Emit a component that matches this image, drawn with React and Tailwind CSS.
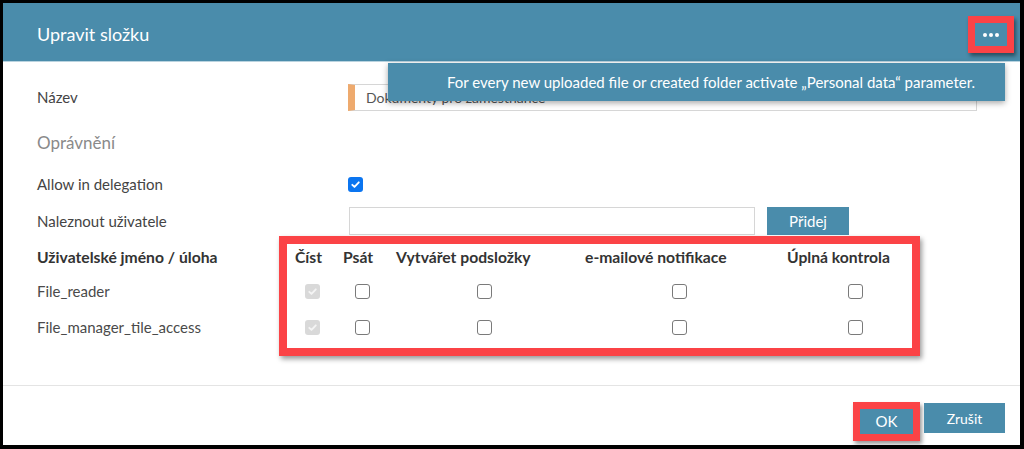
import React from "react";

const font = { fontFamily: "Lato, 'Open Sans', sans-serif" };

function Box({ state }) {
  if (state === "checked") {
    return (
      <span className="flex h-[15px] w-[15px] items-center justify-center rounded-[3px] bg-[#0b75f0]">
        <svg width="11" height="11" viewBox="0 0 12 12" fill="none">
          <path d="M2.5 6.3l2.4 2.4L9.6 3.6" stroke="#fff" strokeWidth="2" strokeLinecap="round" strokeLinejoin="round" />
        </svg>
      </span>
    );
  }
  if (state === "disabled") {
    return (
      <span className="flex h-[15px] w-[15px] items-center justify-center rounded-[3px] bg-[#d9d9d9]">
        <svg width="11" height="11" viewBox="0 0 12 12" fill="none">
          <path d="M2.5 6.3l2.4 2.4L9.6 3.6" stroke="#f4f4f4" strokeWidth="2" strokeLinecap="round" strokeLinejoin="round" />
        </svg>
      </span>
    );
  }
  return <span className="block h-[15px] w-[15px] rounded-[3px] border border-[#7a7a7a] bg-white" />;
}

const cols = [
  { w: "w-[250px]" },
  { w: "w-[48px]", hp: "pl-[8px]", cp: "pl-[18px]", t: "Číst" },
  { w: "w-[50px]", hp: "pl-[8px]", cp: "pl-[20px]", t: "Psát" },
  { w: "w-[175px]", hp: "pl-[11px]", cp: "pl-[92px]", t: "Vytvářet podsložky" },
  { w: "w-[200px]", hp: "pl-[25px]", cp: "pl-[112px]", t: "e-mailové notifikace" },
  { w: "w-[152px]", hp: "pl-[27px]", cp: "pl-[88px]", t: "Úplná kontrola" },
];

function UserRow({ name }) {
  return (
    <div className="flex h-[36px] items-center text-[15px] text-[#4a4a4a]">
      <div className={cols[0].w}>{name}</div>
      {cols.slice(1).map((c, i) => (
        <div key={i} className={`${c.w} ${c.cp} flex`}>
          <Box state={i === 0 ? "disabled" : "empty"} />
        </div>
      ))}
    </div>
  );
}

export default function App() {
  return (
    <div className="h-[449px] w-[1024px] bg-black pb-[4px] pl-[3px] pr-[4px] pt-[3px]" style={font}>
      <div className="relative flex h-full flex-col bg-white">
        {/* Header */}
        <div className="flex h-[59px] items-center justify-between border-b border-[#b9d3df] bg-[#4a8cab] pl-[34px] pr-[6px] pt-[5px]">
          <div className="text-[18px] text-white">Upravit složku</div>
          <div className="flex h-[37px] w-[46px] items-center justify-center border-[7px] border-[#fb4346] bg-[#4a8cab] shadow-[2px_3px_4px_rgba(0,0,0,0.45)]">
            <div className="flex gap-[2px]">
              <span className="block h-[4px] w-[4px] rounded-full bg-white" />
              <span className="block h-[4px] w-[4px] rounded-full bg-white" />
              <span className="block h-[4px] w-[4px] rounded-full bg-white" />
            </div>
          </div>
        </div>

        {/* Body */}
        <div className="flex h-[323px] flex-col pl-[34px]">
          <div className="mt-[22px] flex items-center">
            <div className="w-[311px] text-[15px] text-[#444]">Název</div>
            <div className="flex h-[27px] w-[629px] items-center border border-l-[7px] border-[#d6d6d6] border-l-[#eeaa6e] pl-[11px] text-[14px] text-[#555]">
              Dokumenty pro zaměstnance
            </div>
          </div>
          <div className="mt-[17px] flex h-[30px] items-center text-[17px] text-[#8a8a8a]">Oprávnění</div>
          <div className="mt-[11px] flex h-[30px] items-center">
            <div className="w-[311px] text-[15px] text-[#444]">Allow in delegation</div>
            <Box state="checked" />
          </div>
          <div className="mt-[8px] flex items-center">
            <div className="w-[312px] text-[15px] text-[#444]">Naleznout uživatele</div>
            <div className="h-[28px] w-[406px] border border-[#d6d6d6]" />
            <div className="ml-[12px] flex h-[28px] w-[82px] items-center justify-center bg-[#4a8cab] text-[15px] text-white">
              Přidej
            </div>
          </div>
          <div className="mt-[8px] flex h-[30px] items-center text-[15.7px] font-bold text-[#333]">
            <div className={cols[0].w}>Uživatelské jméno / úloha</div>
            {cols.slice(1).map((c, i) => (
              <div key={i} className={`${c.w} ${c.hp} whitespace-nowrap`}>{c.t}</div>
            ))}
          </div>
          <UserRow name="File_reader" />
          <UserRow name="File_manager_tile_access" />
        </div>

        {/* Footer */}
        <div className="flex flex-1 items-start justify-end border-t border-[#e4e4e4] pr-[15px] pt-[16px]">
          <div className="flex h-[39px] w-[67px] border-[7px] border-[#fb4346] shadow-[2px_3px_4px_rgba(0,0,0,0.4)]">
            <div className="flex flex-1 items-center justify-center bg-[#4a8cab] text-[15px] text-white">OK</div>
          </div>
          <div className="ml-[4px] mt-[1px] flex h-[30px] w-[81px] items-center justify-center bg-[#4a8cab] text-[14px] text-white">
            Zrušit
          </div>
        </div>

        {/* Tooltip overlay */}
        <div className="absolute left-[385px] top-[60px] flex h-[38px] w-[617px] items-center bg-[#4a8cab] pl-[59px] text-[15px] text-white shadow-[0_2px_6px_rgba(0,0,0,0.35)]">
          For every new uploaded file or created folder activate „Personal data“ parameter.
        </div>

        {/* Red annotation over table */}
        <div className="pointer-events-none absolute left-[276px] top-[233px] h-[120px] w-[641px] border-[8px] border-[#fb4346] shadow-[2px_3px_5px_rgba(0,0,0,0.4)]" />
      </div>
    </div>
  );
}
